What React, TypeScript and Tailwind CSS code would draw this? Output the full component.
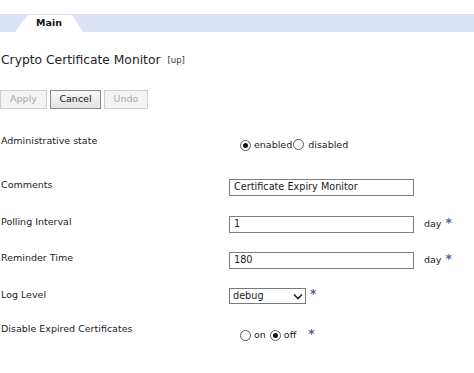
import React from 'react';

const Radio = ({ checked }: { checked?: boolean }) => (
  <span className="inline-flex items-center justify-center w-[11px] h-[11px] rounded-full border border-[#5a5a5a] bg-white">
    {checked && <span className="block w-[5px] h-[5px] rounded-full bg-[#111]" />}
  </span>
);

const Star = ({ className = '' }: { className?: string }) => (
  <span className={`text-[#4b5ca8] text-[12px] leading-none font-bold ${className}`}>*</span>
);

const TextBox = ({ value }: { value: string }) => (
  <div className="w-[185px] h-[17px] border border-[#7f7f7f] bg-white pl-[4px] flex items-center text-[9.7px] text-[#222]">
    {value}
  </div>
);

const App = () => {
  return (
    <div className="w-[474px] h-[373px] overflow-hidden bg-white text-[#222] font-['DejaVu_Sans',sans-serif]">
      {/* Tab strip */}
      <div className="mt-[14px] h-[18px] bg-[#dce2f6] flex items-end">
        <div className="ml-[15px] w-[68px] h-[17px] bg-white flex items-center justify-center text-[9.5px] font-bold text-[#111] [clip-path:polygon(19%_0,84%_0,100%_100%,0_100%)]">
          Main
        </div>
      </div>

      {/* Title */}
      <div className="mt-[20px] pl-[1px] h-[16px] flex items-center">
        <span className="text-[12.3px] text-[#222]">Crypto Certificate Monitor</span>
        <span className="ml-[7px] text-[8.5px] text-[#333]">[up]</span>
      </div>

      {/* Buttons */}
      <div className="mt-[22px] flex gap-[3px] h-[19px]">
        <button className="w-[47px] h-[19px] border border-[#cfcfcf] bg-[#f3f3f3] text-[9.5px] text-[#a9a9a9]">Apply</button>
        <button className="w-[51px] h-[19px] border border-[#8a8a8a] bg-gradient-to-b from-[#f8f8f8] to-[#e2e2e2] text-[9.5px] text-[#111]">Cancel</button>
        <button className="w-[44px] h-[19px] border border-[#cfcfcf] bg-[#f3f3f3] text-[9.5px] text-[#a9a9a9]">Undo</button>
      </div>

      {/* Form rows */}
      <div className="mt-[26px] flex flex-col text-[9.5px]">
        <div className="h-[44px] flex items-start">
          <div className="w-[229px] pl-[1px] leading-[12px]">Administrative state</div>
          <div className="mt-[4px] ml-[11px] h-[12px] flex items-center leading-none">
            <Radio checked />
            <span className="ml-[3px]">enabled</span>
            <span className="ml-[1px]"><Radio /></span>
            <span className="ml-[4px]">disabled</span>
          </div>
        </div>

        <div className="h-[37px] flex items-start">
          <div className="w-[229px] pl-[1px] leading-[12px]">Comments</div>
          <TextBox value="Certificate Expiry Monitor" />
        </div>

        <div className="h-[36px] flex items-start">
          <div className="w-[229px] pl-[1px] leading-[12px]">Polling Interval</div>
          <TextBox value="1" />
          <div className="ml-[10px] h-[17px] flex items-center">
            <span>day</span>
            <Star className="ml-[4px] -mt-[4px]" />
          </div>
        </div>

        <div className="h-[36px] flex items-start">
          <div className="w-[229px] pl-[1px] leading-[12px]">Reminder Time</div>
          <TextBox value="180" />
          <div className="ml-[10px] h-[17px] flex items-center">
            <span>day</span>
            <Star className="ml-[4px] -mt-[4px]" />
          </div>
        </div>

        <div className="h-[35px] flex items-start">
          <div className="w-[229px] pl-[1px] mt-[1px] leading-[12px]">Log Level</div>
          <div className="w-[77px] h-[16px] border border-[#7a7a7a] bg-white pl-[3px] pr-[2px] flex items-center justify-between text-[9.7px]">
            <span>debug</span>
            <svg width="10" height="7" viewBox="0 0 10 7" fill="none">
              <path d="M1 1.5 L5 5.5 L9 1.5" stroke="#222" strokeWidth="1.6" />
            </svg>
          </div>
          <div className="h-[16px] flex items-center">
            <Star className="ml-[4px] -mt-[4px]" />
          </div>
        </div>

        <div className="h-[40px] flex items-start">
          <div className="w-[229px] pl-[1px] leading-[12px]">Disable Expired Certificates</div>
          <div className="mt-[6px] ml-[11px] h-[12px] flex items-center leading-none">
            <Radio />
            <span className="ml-[3px]">on</span>
            <span className="ml-[4px]"><Radio checked /></span>
            <span className="ml-[3px]">off</span>
            <Star className="ml-[12px] -mt-[3px]" />
          </div>
        </div>
      </div>
    </div>
  );
};

export default App;
